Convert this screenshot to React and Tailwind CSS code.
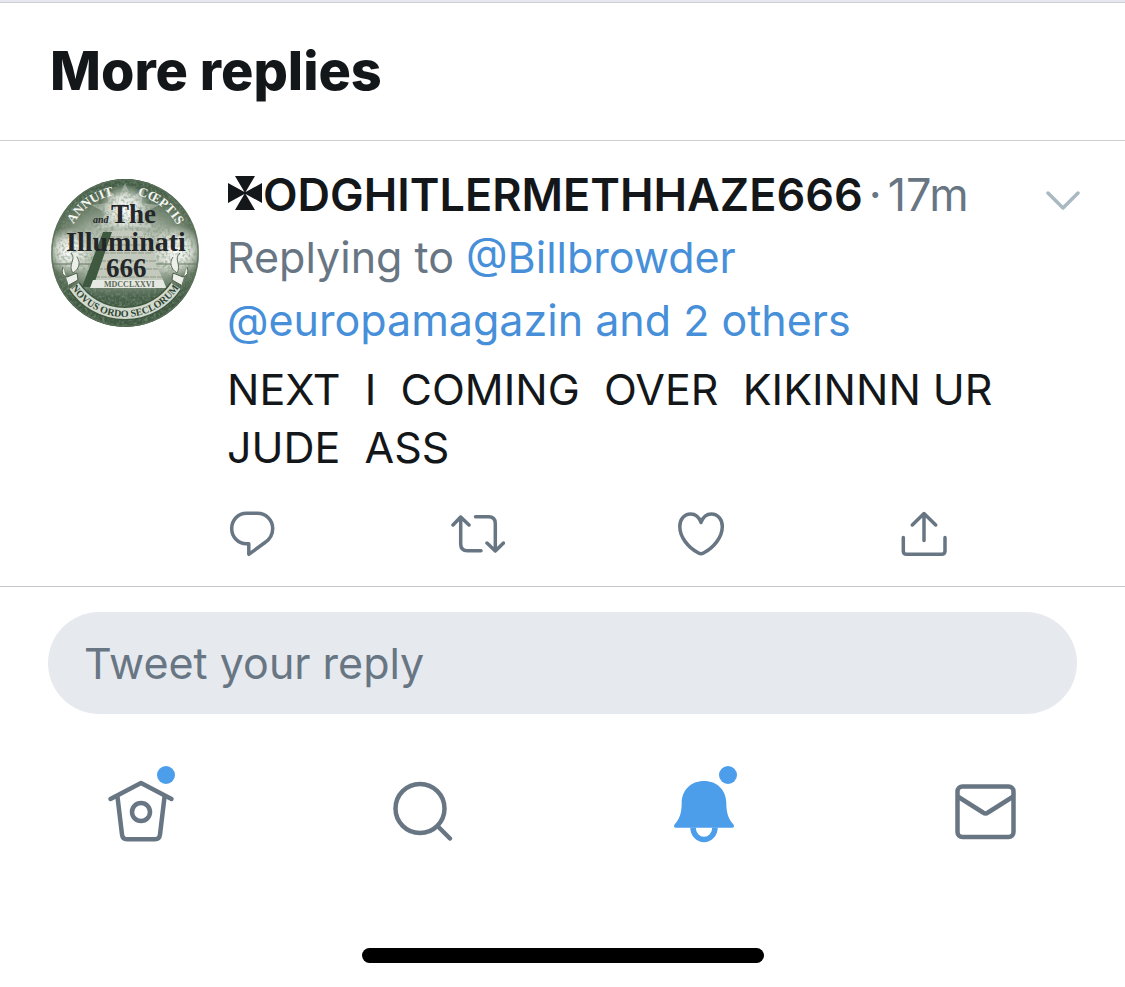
import { useState } from "react";

const iconProps = {
  fill: "none",
  stroke: "currentColor",
  strokeLinecap: "round",
  strokeLinejoin: "round",
  "aria-hidden": true,
};

const Avatar = () => (
  <svg viewBox="0 0 148 148" className="w-full h-full" aria-hidden="true">
    <defs>
      <clipPath id="seal">
        <circle cx="74" cy="74" r="74" />
      </clipPath>
      <radialGradient id="sky" cx="50%" cy="50%" r="50%">
        <stop offset="0" stopColor="#d5d9cf" />
        <stop offset="0.6" stopColor="#b4bdaf" />
        <stop offset="0.85" stopColor="#7c8b76" />
        <stop offset="1" stopColor="#5d715b" />
      </radialGradient>
      <radialGradient id="glow">
        <stop offset="0" stopColor="#fff" />
        <stop offset="0.5" stopColor="#f1f3ee" stopOpacity="0.8" />
        <stop offset="1" stopColor="#e4e8e0" stopOpacity="0" />
      </radialGradient>
      <linearGradient id="dusk" x1="0" y1="0" x2="0" y2="1">
        <stop offset="0" stopColor="#3d5640" stopOpacity="0.9" />
        <stop offset="0.4" stopColor="#3d5640" stopOpacity="0" />
        <stop offset="0.6" stopColor="#3d5640" stopOpacity="0" />
        <stop offset="0.8" stopColor="#3d5640" stopOpacity="0.9" />
      </linearGradient>
      <filter id="etching" x="0" y="0" width="100%" height="100%">
        <feTurbulence type="fractalNoise" baseFrequency="0.35" numOctaves="2" seed="4" />
        <feColorMatrix values="0 0 0 0 0.2  0 0 0 0 0.3  0 0 0 0 0.2  3 0 0 0 -1.3" />
      </filter>
      <path id="upper" d="M15 74A59 59 0 0 1 133 74" />
      <path id="lower" d="M10 74A64 64 0 0 0 138 74" />
    </defs>
    <g clipPath="url(#seal)">
      <rect width="148" height="148" fill="url(#sky)" />
      <rect width="148" height="148" fill="url(#dusk)" />
      <path d="M74 4L80 18L94 10L90 24L108 26L93 34L102 50L74 46L46 50L55 34L40 26L58 24L54 10L68 18Z" fill="#e9ece5" opacity="0.4" />
      <circle cx="74" cy="30" r="25" fill="url(#glow)" />
      <ellipse cx="18" cy="72" rx="24" ry="24" fill="url(#glow)" />
      <ellipse cx="126" cy="72" rx="28" ry="26" fill="url(#glow)" />
      <rect width="148" height="148" filter="url(#etching)" opacity="0.6" />
      <path d="M2 85H146" stroke="#64765f" strokeWidth="1" />
      {/* pyramid, lit face then shaded face */}
      <path d="M60 52H91L115 108H40Z" fill="#c3cabd" />
      <path d="M58 58H94M55 66H97M52 74H101M49 82H104M46 90H107M43 98H111" stroke="#8c9985" strokeWidth="1" strokeDasharray="6 1" />
      <path d="M52 53H61L42 108H31Z" fill="#3e5940" />
      <path d="M42 101H112L115 109H39Z" fill="#e6e9e2" />
      <text x="53" y="108" fontSize="8" fill="#5a6a57" className="font-['Liberation_Serif',serif] font-bold">MDCCLXXVI</text>
      {/* scroll ends and ribbon */}
      <path d="M20 74C26 80 16 86 22 94C28 90 30 84 26 78M129 74C122 80 131 86 126 94C120 90 118 84 122 78" fill="#edf0ea" stroke="#60705c" />
      <path d="M12 88Q9 96 16 98L26 94L27 101L18 106L20 114M136 88Q139 96 132 98L122 94L121 101L130 106L128 114" fill="#edf0ea" stroke="#4c604a" />
      <path d="M23 107A61 61 0 0 0 125 107" fill="none" stroke="#40573f" strokeWidth="14" />
      <path d="M23 107A61 61 0 0 0 125 107" fill="none" stroke="#d3dacf" strokeWidth="11" />
      <g className="font-['Liberation_Serif',serif] font-bold">
        <text fontSize="13" fill="#f4f6f2">
          <textPath href="#upper" startOffset="30">ANNUIT</textPath>
        </text>
        <text fontSize="13" fill="#f4f6f2">
          <textPath href="#upper" startOffset="105">CŒPTIS</textPath>
        </text>
        <text fontSize="10" fill="#2e4531">
          <textPath href="#lower" startOffset="50%" textAnchor="middle">NOVUS ORDO SECLORUM</textPath>
        </text>
      </g>
    </g>
    <circle cx="74" cy="74" r="73" fill="none" stroke="#5d715b" strokeWidth="1" />
    <g className="font-['Liberation_Serif',serif] font-bold" fill="#242629">
      <text x="42" y="44" fontSize="10" fontStyle="italic">and</text>
      <text x="60" y="44" fontSize="27">The</text>
      <text x="15" y="72" fontSize="28">Illuminati</text>
      <text x="55" y="98" fontSize="27">666</text>
    </g>
  </svg>
);

const CrossMark = () => (
  <svg viewBox="0 0 36 36" className="w-9 h-9 -mt-1 shrink-0" fill="currentColor" aria-hidden="true">
    <path d="M8 1H28L18.600 17L35 8V28L18.600 19L28 35H8L17.400 19L1 28V8L17.400 17Z" />
  </svg>
);

const actions = [
  {
    label: "Reply",
    width: 48,
    shape: (
      <path d="M17.500 3.300H28.500C37 3.300 43.700 10 43.700 18.500C43.700 24.500 40.500 29.500 36 32.500L19.800 44.300V33.700H17.500C9 33.700 2.700 27 2.700 18.500S9 3.300 17.500 3.300Z" />
    ),
  },
  {
    label: "Retweet",
    width: 54,
    shape: <path d="M2 15L9.700 7L18 15M9.700 7V34Q9.700 40.700 16.500 40.700H30M24.500 6.700H37.500Q44.300 6.700 44.300 13.500V41M36 33L44.300 41L52.500 33" />,
  },
  {
    label: "Like",
    width: 48,
    shape: (
      <path d="M23 12.500C21 7 17 4 12.700 4C6 4 1.800 9.500 1.800 16.500C1.800 27 10 37.500 20.500 43Q23 44.300 25.500 43C36 37.500 44.300 27 44.300 16.500C44.300 9.500 40 4 33.300 4C29 4 25 7 23 12.500Z" />
    ),
  },
  {
    label: "Share",
    width: 48,
    shape: <path d="M12.300 15L24 3.500L35.700 15M24 3.500V30.500M3.300 27.500V41Q3.300 44.300 6.600 44.300H41.500Q45 44.300 45 41V27.500" />,
  },
];

const tabs = [
  {
    label: "Home",
    unread: true,
    shape: (
      <>
        <path d="M3.500 20L34 4L64.500 20M10.500 18L15 55.500Q15.600 60.300 20 60.300H48Q52.400 60.300 53 55.500L57.500 18" />
        <circle cx="34" cy="33" r="9" />
      </>
    ),
  },
  {
    label: "Search",
    shape: (
      <>
        <circle cx="32" cy="29.500" r="24.500" />
        <path d="M50.500 48L62 59.500" />
      </>
    ),
  },
  {
    label: "Notifications",
    unread: true,
    active: true,
    shape: (
      <>
        <path stroke="none" fill="currentColor" d="M35 2C48 2 57.300 11 57.300 24C57.300 34 59.500 40 64.500 45.500Q66 48.700 63 48.700H7Q4 48.700 5.500 45.500C10.500 40 12.700 34 12.700 24C12.700 11 22 2 35 2Z" />
        <path strokeLinecap="butt" strokeWidth="5.500" d="M24 48.500A11 12 0 0 0 46 48.500" />
      </>
    ),
  },
  {
    label: "Messages",
    shape: (
      <>
        <rect x="7.500" y="7.500" width="56" height="50.500" rx="5" />
        <path d="M8.500 18L33 33.500Q35.500 35.500 38 33.500L62.500 18" />
      </>
    ),
  },
];

const App = () => {
  const [reply, setReply] = useState("");

  return (
    <main className="bg-white text-[#14171a] font-['Inter',sans-serif]">
      <div className="h-[3px] bg-[#e6e8ef] border-b border-[#ccd0d6]" />

      <header className="px-[50px] pt-9 pb-[37px] border-b border-[#ccd0d3]">
        <h1 className="text-[54px] leading-16 font-extrabold">More replies</h1>
      </header>

      <article className="flex gap-7 pl-[51px] pr-11 pt-[22px] pb-7 border-b border-[#c3c6ca]">
        <div className="w-[148px] h-[148px] mt-4 shrink-0">
          <Avatar />
        </div>

        <div className="flex-1 min-w-0 text-[43px]">
          <div className="flex items-center justify-between text-[45px] leading-[63px]">
            <div className="flex items-center">
              <CrossMark />
              <h2 className="font-semibold">ODGHITLERMETHHAZE666</h2>
              <div className="flex gap-1.5 ml-1.5 text-[#687684]">
                <span>·</span>
                <time>17m</time>
              </div>
            </div>
            <button aria-label="More options" className="text-[#aab8c2]">
              <svg viewBox="0 0 36 20" className="w-9 h-5 mt-3" strokeWidth="3.500" {...iconProps}>
                <path d="M3 2L18 17L33 2" />
              </svg>
            </button>
          </div>

          <p className="leading-[63px] text-[#687684]">
            Replying to <a href="#billbrowder" className="text-[#4790d9]">@Billbrowder</a>
            <br />
            <a href="#europamagazin" className="text-[#4790d9]">@europamagazin and 2 others</a>
          </p>

          <p className="leading-[58px] mt-2 whitespace-pre-wrap">{"NEXT  I  COMING  OVER  KIKINNN UR JUDE  ASS"}</p>

          <div className="flex justify-between mt-[34px] ml-0.5 mr-[133px] text-[#687684]">
            {actions.map((action) => (
              <button key={action.label} aria-label={action.label}>
                <svg viewBox={`0 0 ${action.width} 48`} width={action.width} height="48" strokeWidth="3.500" {...iconProps}>
                  {action.shape}
                </svg>
              </button>
            ))}
          </div>
        </div>
      </article>

      <form className="px-12 pt-[25px]" onSubmit={(e) => e.preventDefault()}>
        <input
          type="text"
          aria-label="Tweet your reply"
          placeholder="Tweet your reply"
          value={reply}
          onChange={(e) => setReply(e.target.value)}
          className="block w-full h-[102px] px-9 rounded-full bg-[#e6e9ee] text-[43px] placeholder:text-[#687684] outline-none"
        />
      </form>

      <nav className="grid grid-cols-4 pt-[65px]">
        {tabs.map((tab) => (
          <a
            key={tab.label}
            href={`#${tab.label.toLowerCase()}`}
            aria-label={tab.label}
            className={`relative justify-self-center ${tab.active ? "text-[#4c9eeb]" : "text-[#687684]"}`}
          >
            <svg viewBox="0 0 68 64" className="block w-[68px] h-16" strokeWidth="4.500" {...iconProps}>
              {tab.shape}
            </svg>
            {tab.unread && <span className="absolute -top-[13px] right-0 w-[18px] h-[18px] rounded-full bg-[#4c9eeb]" />}
          </a>
        ))}
      </nav>

      <div className="w-[402px] h-[15px] mx-auto mt-[105px] mb-6 rounded-full bg-black" />
    </main>
  );
};

export default App;
